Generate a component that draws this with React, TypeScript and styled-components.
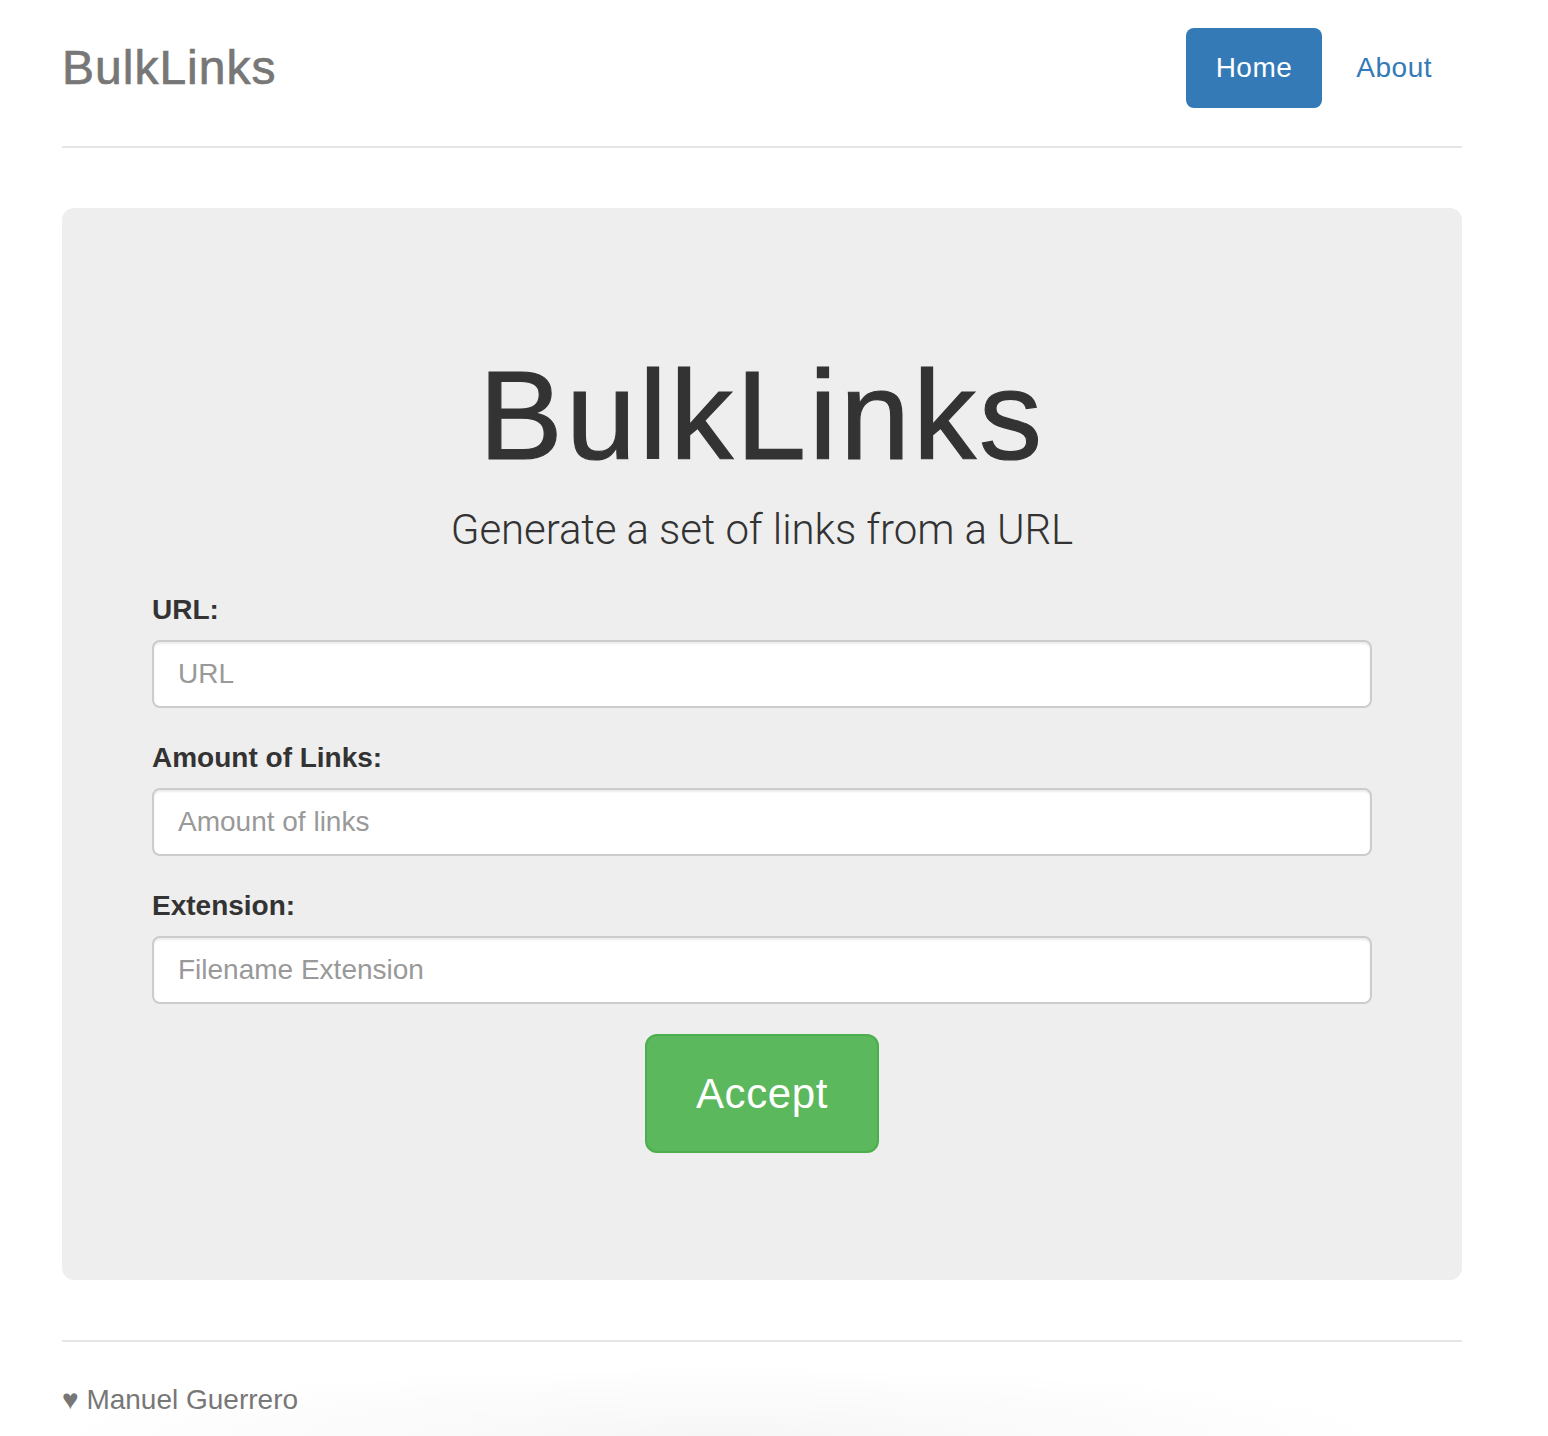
import React from "react";
import styled, { createGlobalStyle } from "styled-components";

const Global = createGlobalStyle`
  html, body {
    margin: 0;
    padding: 0;
    background: #fff;
  }
  body {
    font-family: "Liberation Sans", Arial, sans-serif;
    color: #333;
  }
  * { box-sizing: border-box; }
`;

const Page = styled.div`
  min-height: 1436px;
  background: radial-gradient(ellipse 680px 70px at 720px 100%, rgba(0, 0, 0, 0.035), rgba(0, 0, 0, 0) 100%);
  overflow: hidden;
`;

const Container = styled.div`
  width: 1400px;
  margin-left: 62px;
  padding-top: 28px;
`;

const Header = styled.header`
  display: flex;
  align-items: center;
  justify-content: space-between;
  padding-bottom: 38px;
  border-bottom: 2px solid #e5e5e5;
`;

const Brand = styled.h3`
  margin: 0;
  font-size: 48px;
  line-height: 80px;
  font-weight: 400;
  color: #777;
  letter-spacing: 1px;
  -webkit-text-stroke: 0.7px #777;
`;

const Nav = styled.nav`
  display: flex;
  gap: 4px;
`;

const Pill = styled.a<{ $active?: boolean }>`
  display: block;
  height: 80px;
  line-height: 80px;
  padding: 0 30px;
  font-size: 28px;
  letter-spacing: 0.5px;
  border-radius: 8px;
  text-decoration: none;
  color: ${(p) => (p.$active ? "#fff" : "#337ab7")};
  background: ${(p) => (p.$active ? "#337ab7" : "transparent")};
`;

const Jumbotron = styled.section`
  margin-top: 60px;
  background: #eee;
  border-radius: 12px;
  padding: 96px 90px 127px;
  text-align: center;
`;

const Title = styled.h1`
  margin: 43px 0 15px;
  font-size: 126px;
  line-height: 138px;
  font-weight: 400;
  color: #333;
  letter-spacing: 3px;
  -webkit-text-stroke: 1.2px #333;
`;

const Lead = styled.p`
  margin: 0 0 30px;
  font-family: Roboto, "Liberation Sans", sans-serif;
  font-size: 42px;
  line-height: 60px;
  font-weight: 300;
  letter-spacing: -0.1px;
  color: #333;
`;

const Form = styled.form`
  text-align: left;
`;

const Group = styled.div`
  margin-bottom: 30px;
`;

const Label = styled.label`
  display: block;
  margin-bottom: 10px;
  font-size: 28px;
  line-height: 40px;
  font-weight: 700;
  color: #333;
`;

const Input = styled.input`
  display: block;
  width: 100%;
  height: 68px;
  padding: 12px 24px;
  font-family: "Liberation Sans", Arial, sans-serif;
  font-size: 28px;
  line-height: 40px;
  color: #555;
  background: #fff;
  border: 2px solid #ccc;
  border-radius: 8px;
  box-shadow: inset 0 2px 2px rgba(0, 0, 0, 0.075);
  outline: none;
  &::placeholder {
    color: #999;
  }
`;

const Actions = styled.div`
  display: flex;
  justify-content: center;
`;

const AcceptButton = styled.button`
  height: 119px;
  padding: 0 49px;
  font-family: "Liberation Sans", Arial, sans-serif;
  font-size: 42px;
  line-height: 60px;
  letter-spacing: 0.6px;
  color: #fff;
  background: #5cb85c;
  border: 2px solid #4cae4c;
  border-radius: 12px;
  cursor: pointer;
`;

const Footer = styled.footer`
  margin-top: 60px;
  border-top: 2px solid #e5e5e5;
  padding-top: 38px;
`;

const FooterText = styled.p`
  margin: 0;
  font-size: 28px;
  line-height: 40px;
  color: #777;
`;

export default function App() {
  return (
    <Page>
      <Global />
      <Container>
        <Header>
          <Brand>BulkLinks</Brand>
          <Nav>
            <Pill href="#" $active>
              Home
            </Pill>
            <Pill href="#">About</Pill>
          </Nav>
        </Header>

        <Jumbotron>
          <Title>BulkLinks</Title>
          <Lead>Generate a set of links from a URL</Lead>
          <Form onSubmit={(e) => e.preventDefault()}>
            <Group>
              <Label htmlFor="url">URL:</Label>
              <Input id="url" type="text" placeholder="URL" />
            </Group>
            <Group>
              <Label htmlFor="amount">Amount of Links:</Label>
              <Input id="amount" type="text" placeholder="Amount of links" />
            </Group>
            <Group>
              <Label htmlFor="ext">Extension:</Label>
              <Input id="ext" type="text" placeholder="Filename Extension" />
            </Group>
            <Actions>
              <AcceptButton type="submit">Accept</AcceptButton>
            </Actions>
          </Form>
        </Jumbotron>

        <Footer>
          <FooterText>♥ Manuel Guerrero</FooterText>
        </Footer>
      </Container>
    </Page>
  );
}
